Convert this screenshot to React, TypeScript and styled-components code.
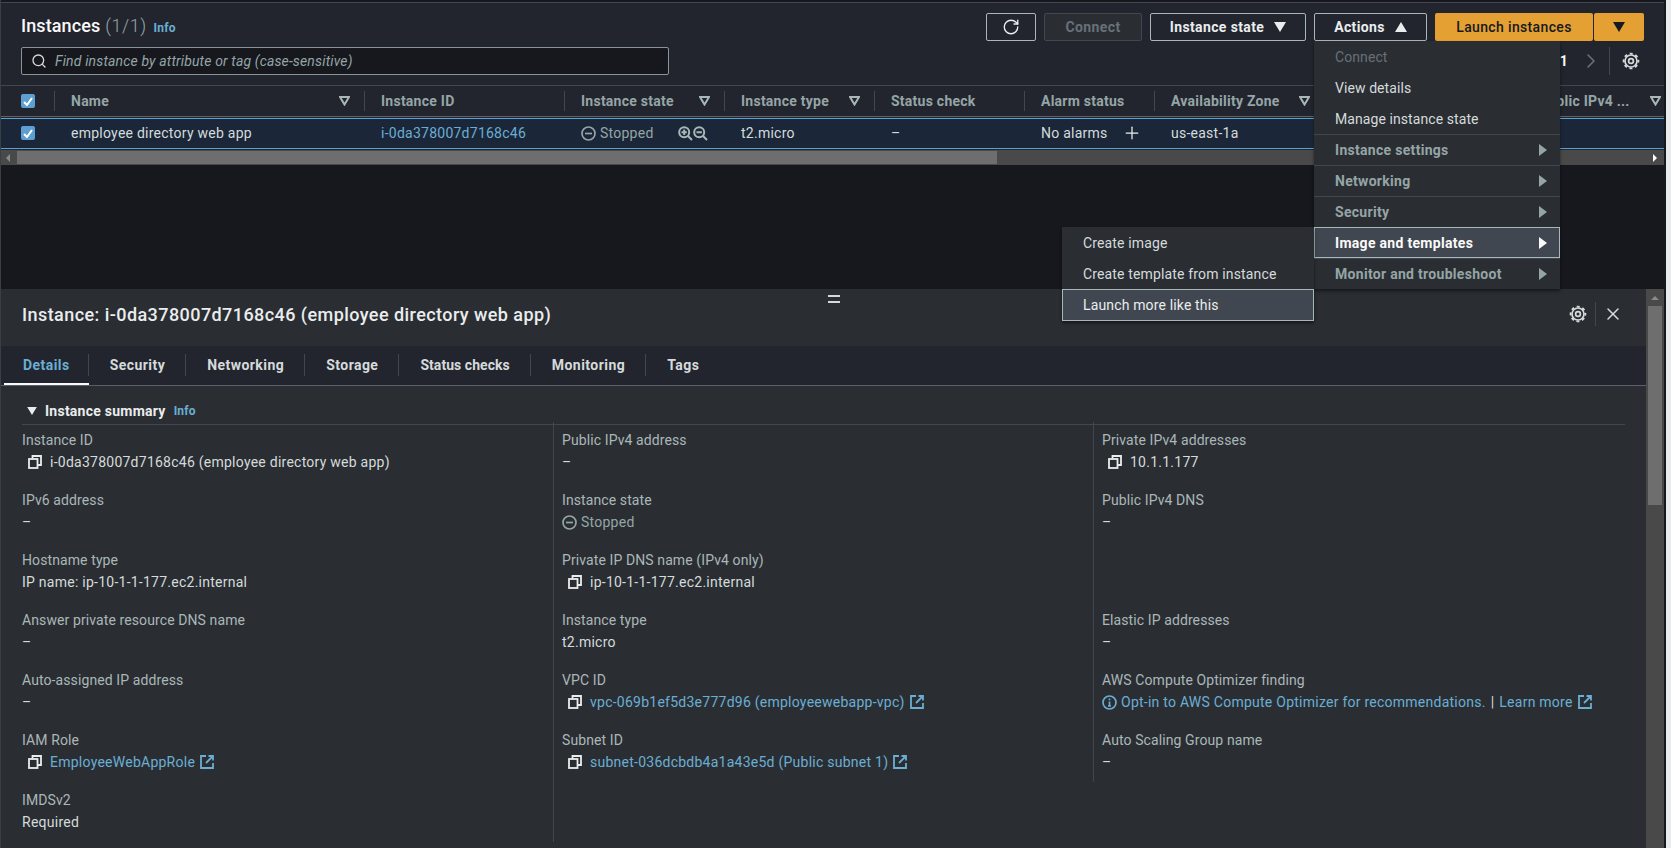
import React from "react";
import styled, { createGlobalStyle } from "styled-components";
import { Plus, RotateCw, Search, X, ChevronRight } from "lucide-react";

const GlobalStyle = createGlobalStyle`
  html, body {
    margin: 0;
    padding: 0;
    background: #e9ebed;
    font-family: Roboto, "Noto Sans", "Liberation Sans", sans-serif;
    font-size: 14px;
    letter-spacing: 0.25px;
  }
  * { box-sizing: border-box; }
`;

const LINK = "#6aaed3";
const COLUMNS = "53px 310px 200px 160px 150px 150px 130px 170px 198px 153px";

const Page = styled.div`
  width: 1671px;
  height: 848px;
  overflow: hidden;
  display: flex;
`;

const Main = styled.div`
  width: 1666px;
  height: 848px;
  flex: none;
  display: flex;
  flex-direction: column;
  background: #16181e;
  border-left: 1px solid #3a3f47;
  padding-right: 2px;
`;

const Strip = styled.div`
  flex: 1;
  background: #e9ebed;
`;

const TopPanel = styled.section`
  margin-top: 2px;
  border-top: 1px solid #414750;
  background: #22252e;
  flex: none;
`;

const HeaderArea = styled.div`
  height: 83px;
  padding: 10px 20px 0 20px;
  display: flex;
  flex-direction: column;
  border-bottom: 1px solid #414750;
`;

const HeaderTop = styled.div`
  display: flex;
  align-items: center;
  justify-content: space-between;
  height: 28px;
`;

const HeaderBottom = styled.div`
  display: flex;
  align-items: center;
  justify-content: space-between;
  margin-top: 6px;
  height: 28px;
`;

const Title = styled.h1`
  margin: 0 0 4px;
  font-size: 18px;
  font-weight: 500;
  letter-spacing: 0.1px;
  color: #fafafa;
  span {
    font-weight: 300;
    color: #95a5a6;
    margin-left: 5px;
    letter-spacing: 0.5px;
  }
`;

const InfoLink = styled.a<{ $flush?: boolean }>`
  color: ${LINK};
  font-size: 12px;
  font-weight: 700;
  letter-spacing: 0.2px;
  margin-left: ${(p) => (p.$flush ? 0 : 7)}px;
`;

const Actions = styled.div`
  display: flex;
  align-items: center;
  gap: 8px;
`;

const Button = styled.button<{ $w: number; $disabled?: boolean }>`
  width: ${(p) => p.$w}px;
  height: 28px;
  display: flex;
  align-items: center;
  justify-content: center;
  gap: 10px;
  padding: 0;
  font: 700 14px Roboto, sans-serif;
  letter-spacing: 0.38px;
  color: ${(p) => (p.$disabled ? "#687078" : "#eaeded")};
  background: ${(p) => (p.$disabled ? "#2a2e33" : "transparent")};
  border: 1px solid ${(p) => (p.$disabled ? "#414750" : "#aab7b8")};
  border-radius: 2px;
`;

const ActionsWrap = styled.div`
  position: relative;
`;

const SplitButton = styled.div`
  display: flex;
  gap: 1px;
`;

const PrimaryButton = styled.button<{ $w: number }>`
  width: ${(p) => p.$w}px;
  height: 28px;
  display: flex;
  align-items: center;
  justify-content: center;
  padding: 0;
  font: 500 14px Roboto, sans-serif;
  letter-spacing: 0.35px;
  color: #16191f;
  background: #e5a033;
  border: none;
  border-radius: 2px;
`;

const Caret = styled.svg<{ $up?: boolean; $color?: string; $small?: boolean }>`
  width: ${(p) => (p.$small ? 10 : 12)}px;
  height: ${(p) => (p.$small ? 8 : 10)}px;
  flex: none;
  fill: ${(p) => p.$color || "#eaeded"};
  transform: ${(p) => (p.$up ? "rotate(180deg)" : "none")};
`;

const Menu = styled.div`
  position: absolute;
  top: 28px;
  right: -133px;
  width: 246px;
  background: #2a2e33;
  box-shadow: 0 2px 3px rgba(0, 0, 0, 0.5);
  z-index: 5;
`;

const MenuItem = styled.div<{
  $dim?: boolean;
  $group?: boolean;
  $active?: boolean;
}>`
  position: relative;
  height: 31px;
  display: flex;
  align-items: center;
  justify-content: space-between;
  padding: 0 13px 0 21px;
  font-weight: ${(p) => (p.$group ? 700 : 400)};
  letter-spacing: ${(p) => (p.$group ? 0.3 : 0.08)}px;
  color: ${(p) => (p.$dim ? "#687078" : p.$group ? "#95a5a6" : "#d5dbdb")};
  border-top: ${(p) => (p.$group ? "1px solid #414750" : "none")};
  ${(p) =>
    p.$active
      ? "background: #414750; outline: 1px solid #aab7b8; outline-offset: -1px; color: #fafafa;"
      : ""}
`;

const SubMenu = styled.div`
  position: absolute;
  top: -1px;
  right: 246px;
  width: 252px;
  background: #2a2e33;
  box-shadow: 0 2px 3px rgba(0, 0, 0, 0.5);
  font-weight: 400;
  letter-spacing: 0.15px;
`;

const SubItem = styled.div<{ $active?: boolean }>`
  height: 31px;
  display: flex;
  align-items: center;
  padding-left: 21px;
  color: #d5dbdb;
  ${(p) =>
    p.$active
      ? "height: 32px; background: #414750; outline: 1px solid #aab7b8; outline-offset: -1px; color: #eaeded;"
      : ""}
`;

const SearchBox = styled.div`
  width: 648px;
  height: 28px;
  display: flex;
  align-items: center;
  gap: 8px;
  padding-left: 9px;
  background: #16181e;
  border: 1px solid #879596;
  border-radius: 2px;
  font-style: italic;
  letter-spacing: 0.15px;
  color: #95a5a6;
`;

const Pager = styled.div`
  display: flex;
  align-items: center;
  height: 28px;
  color: #fafafa;
  font-weight: 700;
  margin-right: 4px;
`;

const PagerChevron = styled.span`
  display: flex;
  margin-left: 11px;
  color: #687078;
`;

const PagerDivider = styled.span`
  width: 1px;
  height: 28px;
  background: #414750;
  margin: 0 12px 0 6px;
`;

const TableHead = styled.div`
  display: grid;
  grid-template-columns: ${COLUMNS};
  height: 31px;
  border-bottom: 1px solid #5b616b;
`;

const TableRow = styled.div`
  display: grid;
  grid-template-columns: ${COLUMNS};
  height: 31px;
  margin-top: 1px;
  padding-bottom: 1px;
  background: #1b2739;
  border-top: 1px solid #5c9fd0;
  border-bottom: 1px solid #5c9fd0;
  color: #d5dbdb;
`;

const CheckCell = styled.div`
  display: flex;
  align-items: center;
  padding-left: 20px;
`;

const Checkbox = styled.span`
  width: 14px;
  height: 14px;
  border-radius: 2px;
  background: #5c9fd0;
  display: flex;
  align-items: center;
  justify-content: center;
`;

const HeadCell = styled.div`
  position: relative;
  display: flex;
  align-items: center;
  justify-content: space-between;
  padding: 0 14px 0 17px;
  color: #95a5a6;
  font-weight: 700;
  letter-spacing: 0.25px;
  white-space: nowrap;
  overflow: hidden;
  &::before {
    content: "";
    position: absolute;
    left: 0;
    top: 5px;
    height: 20px;
    width: 1px;
    background: #414750;
  }
`;

const RowCell = styled.div`
  display: flex;
  align-items: center;
  padding-left: 17px;
  white-space: nowrap;
  gap: 4px;
`;

const CellLink = styled.a`
  color: ${LINK};
`;

const MutedText = styled.span`
  color: #95a5a6;
`;

const StoppedValue = styled(MutedText)`
  margin-left: 4px;
`;

const ZoomGroup = styled.span`
  display: flex;
  gap: 0;
  margin-left: 20px;
  color: #aab7b8;
`;

const AddAlarm = styled.span`
  display: flex;
  margin-left: 10px;
  color: #eaeded;
`;

const HScroll = styled.div`
  height: 15px;
  margin-top: 1px;
  background: #494949;
  display: flex;
  align-items: center;
  padding: 0 7px 0 5px;
`;

const HThumb = styled.span`
  width: 980px;
  height: 13px;
  margin-left: 7px;
  background: #6e6e6e;
`;

const Arrow = styled.span<{ $dir: "left" | "right" | "up"; $color?: string }>`
  width: 0;
  height: 0;
  ${(p) =>
    p.$dir === "left"
      ? `border-top: 4px solid transparent; border-bottom: 4px solid transparent; border-right: 4px solid ${p.$color || "#8a8a8a"};`
      : p.$dir === "right"
      ? `border-top: 4px solid transparent; border-bottom: 4px solid transparent; border-left: 4px solid ${p.$color || "#fff"}; margin-left: auto;`
      : `border-left: 4px solid transparent; border-right: 4px solid transparent; border-bottom: 4px solid ${p.$color || "#8a8a8a"};`}
`;

const Gap = styled.div`
  height: 124px;
  flex: none;
`;

const DetailWrap = styled.section`
  flex: 1;
  display: flex;
  position: relative;
  min-height: 0;
  background: #2a2e33;
`;

const Handle = styled.span`
  position: absolute;
  left: 827px;
  top: 6px;
  width: 12px;
  height: 8px;
  border-top: 2px solid #d5dbdb;
  border-bottom: 2px solid #d5dbdb;
`;

const DetailBody = styled.div`
  flex: 1;
  min-width: 0;
`;

const VScroll = styled.div`
  width: 18px;
  background: #494949;
  display: flex;
  flex-direction: column;
  align-items: center;
  padding-top: 7px;
`;

const VThumb = styled.span`
  width: 14px;
  height: 199px;
  margin-top: 6px;
  background: #6e6e6e;
`;

const DetailHeader = styled.div`
  height: 57px;
  display: flex;
  align-items: center;
  justify-content: space-between;
  padding: 0 23px 7px 21px;
`;

const DetailTitle = styled.h2`
  margin: 0;
  font-size: 18px;
  font-weight: 500;
  letter-spacing: 0.43px;
  color: #eaeded;
`;

const HeaderTools = styled.div`
  display: flex;
  align-items: center;
  color: #d5dbdb;
`;

const ToolDivider = styled.span`
  width: 1px;
  height: 24px;
  background: #414750;
  margin: 0 7px 0 8px;
`;

const TabBar = styled.div`
  height: 40px;
  display: flex;
  align-items: center;
  padding-left: 3px;
  background: #22252e;
  border-bottom: 1px solid #5b616b;
`;

const Tab = styled.div<{ $active?: boolean; $last?: boolean; $tight?: boolean }>`
  position: relative;
  height: 39px;
  display: flex;
  align-items: center;
  padding: 0 ${(p) => (p.$active ? 19 : 21)}px;
  font-weight: 700;
  letter-spacing: ${(p) => (p.$tight ? 0.05 : 0.45)}px;
  color: ${(p) => (p.$active ? LINK : "#d5dbdb")};
  border-bottom: 2px solid ${(p) => (p.$active ? "#fafafa" : "transparent")};
  &::after {
    content: "";
    position: absolute;
    right: 0;
    top: 8px;
    height: 22px;
    width: 1px;
    background: ${(p) => (p.$last ? "transparent" : "#414750")};
  }
`;

const Summary = styled.div`
  padding: 0 21px;
`;

const SummaryHead = styled.div`
  display: flex;
  align-items: center;
  gap: 8px;
  height: 39px;
  padding: 12px 0 0 5px;
  border-bottom: 1px solid #414750;
  color: #eaeded;
  font-weight: 700;
  letter-spacing: 0.25px;
`;

const SummaryGrid = styled.div`
  display: grid;
  grid-template-columns: 531px 540px 532px;
  margin-top: -3px;
`;

const Column = styled.div<{ $first?: boolean; $short?: boolean }>`
  padding-left: ${(p) => (p.$first ? 0 : 8)}px;
  padding-top: 8px;
  border-left: ${(p) => (p.$first ? "none" : "1px solid #414750")};
  height: ${(p) => (p.$short ? "360px" : "420px")};
`;

const Field = styled.div`
  height: 60px;
`;

const FieldLabel = styled.div`
  height: 20px;
  line-height: 20px;
  color: #aab7b8;
  letter-spacing: 0.1px;
`;

const FieldValue = styled.div`
  display: flex;
  align-items: center;
  height: 20px;
  margin-top: 2px;
  color: #d5dbdb;
  white-space: nowrap;
`;

const Link = styled.a`
  color: ${LINK};
`;

const CopySlot = styled.span`
  display: flex;
  margin: 0 8px 0 6px;
  color: #eaeded;
`;

const Trailing = styled.span`
  display: flex;
  margin-left: 5px;
  color: ${LINK};
`;

const InfoIconSlot = styled.span`
  display: flex;
  margin-right: 4px;
  color: ${LINK};
`;

const Pipe = styled.span`
  margin: 0 5px;
  color: #d5dbdb;
`;

const DownTriangle = ({ color, small }: { color?: string; small?: boolean }) => (
  <Caret viewBox="0 0 12 10" $color={color} $small={small}>
    <path d="M0 0h12L6 10z" />
  </Caret>
);

const RightTriangle = ({ color }: { color: string }) => (
  <svg width="8" height="12" viewBox="0 0 8 12" fill={color}>
    <path d="M0 0l8 6-8 6z" />
  </svg>
);

const FilterIcon = () => (
  <svg width="11" height="10" viewBox="0 0 11 10" fill="none" stroke="#aab7b8" strokeWidth="2">
    <path d="M1 1h9L5.5 8.5z" />
  </svg>
);

const Tick = () => (
  <svg width="10" height="9" viewBox="0 0 10 9" fill="none" stroke="#fff" strokeWidth="2">
    <path d="M1 5l3 3 5-7" />
  </svg>
);

const GearIcon = () => (
  <svg width="18" height="18" viewBox="0 0 18 18" fill="none" stroke="#d5dbdb">
    <circle cx="9" cy="9" r="6" strokeWidth="1.7" />
    <circle cx="9" cy="9" r="2.4" strokeWidth="1.7" />
    <circle cx="9" cy="9" r="7.4" strokeWidth="1.8" strokeDasharray="3 2.81" strokeDashoffset="1.5" />
  </svg>
);

const CopyIcon = () => (
  <svg width="14" height="14" viewBox="0 0 14 14" fill="none" stroke="currentColor" strokeWidth="1.8">
    <rect x="1" y="4" width="8.5" height="9" />
    <path d="M4.5 4V1h8.5v9h-3.5" />
  </svg>
);

const ExternalIcon = () => (
  <svg width="14" height="14" viewBox="0 0 14 14" fill="none" stroke="currentColor" strokeWidth="1.8">
    <path d="M6 1H1v12h12V8" />
    <path d="M8.5 1H13v4.5M13 1L6 8" />
  </svg>
);

const StoppedIcon = () => (
  <svg width="15" height="15" viewBox="0 0 15 15" fill="none" stroke="#95a5a6" strokeWidth="1.7">
    <circle cx="7.5" cy="7.5" r="6.5" />
    <path d="M4 7.5h7" />
  </svg>
);

const InfoCircle = () => (
  <svg width="15" height="15" viewBox="0 0 15 15" fill="none" stroke="currentColor" strokeWidth="1.7">
    <circle cx="7.5" cy="7.5" r="6.5" />
    <path d="M7.5 6.5v4.5M7.5 3.5v1.7M6 11h3" />
  </svg>
);

const ZoomIcon = ({ plus }: { plus?: boolean }) => (
  <svg width="15" height="15" viewBox="0 0 15 15" fill="none" stroke="currentColor" strokeWidth="2">
    <circle cx="6.2" cy="6.2" r="5" />
    <path d={plus ? "M3.5 6.2h5.4M6.2 3.5v5.4M10 10l4 4" : "M3.5 6.2h5.4M10 10l4 4"} />
  </svg>
);

type FieldData = {
  label?: string;
  value?: string;
  copy?: boolean;
  link?: boolean;
  external?: boolean;
  stopped?: boolean;
  optimizer?: boolean;
};

const columnOne: FieldData[] = [
  { label: "Instance ID", value: "i-0da378007d7168c46 (employee directory web app)", copy: true },
  { label: "IPv6 address", value: "–" },
  { label: "Hostname type", value: "IP name: ip-10-1-1-177.ec2.internal" },
  { label: "Answer private resource DNS name", value: "–" },
  { label: "Auto-assigned IP address", value: "–" },
  { label: "IAM Role", value: "EmployeeWebAppRole", copy: true, link: true, external: true },
  { label: "IMDSv2", value: "Required" },
];

const columnTwo: FieldData[] = [
  { label: "Public IPv4 address", value: "–" },
  { label: "Instance state", value: "Stopped", stopped: true },
  { label: "Private IP DNS name (IPv4 only)", value: "ip-10-1-1-177.ec2.internal", copy: true },
  { label: "Instance type", value: "t2.micro" },
  { label: "VPC ID", value: "vpc-069b1ef5d3e777d96 (employeewebapp-vpc)", copy: true, link: true, external: true },
  { label: "Subnet ID", value: "subnet-036dcbdb4a1a43e5d (Public subnet 1)", copy: true, link: true, external: true },
];

const columnThree: FieldData[] = [
  { label: "Private IPv4 addresses", value: "10.1.1.177", copy: true },
  { label: "Public IPv4 DNS", value: "–" },
  {},
  { label: "Elastic IP addresses", value: "–" },
  { label: "AWS Compute Optimizer finding", optimizer: true },
  { label: "Auto Scaling Group name", value: "–" },
];

const tabs = ["Details", "Security", "Networking", "Storage", "Status checks", "Monitoring", "Tags"];

const headCells: [string, boolean][] = [
  ["Name", true],
  ["Instance ID", false],
  ["Instance state", true],
  ["Instance type", true],
  ["Status check", false],
  ["Alarm status", false],
  ["Availability Zone", true],
  ["", false],
  ["Public IPv4 ...", true],
];

function renderField(f: FieldData, i: number) {
  if (!f.label) return <Field key={i} />;
  return (
    <Field key={i}>
      <FieldLabel>{f.label}</FieldLabel>
      <FieldValue>
        {f.copy && (
          <CopySlot>
            <CopyIcon />
          </CopySlot>
        )}
        {f.stopped && (
          <>
            <StoppedIcon />
            <StoppedValue>{f.value}</StoppedValue>
          </>
        )}
        {f.optimizer && (
          <>
            <InfoIconSlot>
              <InfoCircle />
            </InfoIconSlot>
            <Link>Opt-in to AWS Compute Optimizer for recommendations.</Link>
            <Pipe>|</Pipe>
            <Link>Learn more</Link>
            <Trailing>
              <ExternalIcon />
            </Trailing>
          </>
        )}
        {!f.stopped && !f.optimizer && (f.link ? <Link>{f.value}</Link> : f.value)}
        {f.external && (
          <Trailing>
            <ExternalIcon />
          </Trailing>
        )}
      </FieldValue>
    </Field>
  );
}

export default function App() {
  return (
    <Page>
      <GlobalStyle />
      <Main>
        <TopPanel>
          <HeaderArea>
            <HeaderTop>
              <Title>
                Instances<span>(1/1)</span>
                <InfoLink>Info</InfoLink>
              </Title>
              <Actions>
                <Button $w={50}>
                  <RotateCw size={18} strokeWidth={1.8} />
                </Button>
                <Button $w={98} $disabled>
                  Connect
                </Button>
                <Button $w={156}>
                  Instance state
                  <DownTriangle />
                </Button>
                <ActionsWrap>
                  <Button $w={113}>
                    Actions
                    <Caret viewBox="0 0 12 10" $up>
                      <path d="M0 0h12L6 10z" />
                    </Caret>
                  </Button>
                  <Menu>
                    <MenuItem $dim>Connect</MenuItem>
                    <MenuItem>View details</MenuItem>
                    <MenuItem>Manage instance state</MenuItem>
                    <MenuItem $group>
                      Instance settings
                      <RightTriangle color="#95a5a6" />
                    </MenuItem>
                    <MenuItem $group>
                      Networking
                      <RightTriangle color="#95a5a6" />
                    </MenuItem>
                    <MenuItem $group>
                      Security
                      <RightTriangle color="#95a5a6" />
                    </MenuItem>
                    <MenuItem $group $active>
                      Image and templates
                      <RightTriangle color="#fafafa" />
                      <SubMenu>
                        <SubItem>Create image</SubItem>
                        <SubItem>Create template from instance</SubItem>
                        <SubItem $active>Launch more like this</SubItem>
                      </SubMenu>
                    </MenuItem>
                    <MenuItem $group>
                      Monitor and troubleshoot
                      <RightTriangle color="#95a5a6" />
                    </MenuItem>
                  </Menu>
                </ActionsWrap>
                <SplitButton>
                  <PrimaryButton $w={158}>Launch instances</PrimaryButton>
                  <PrimaryButton $w={50}>
                    <DownTriangle color="#16191f" />
                  </PrimaryButton>
                </SplitButton>
              </Actions>
            </HeaderTop>
            <HeaderBottom>
              <SearchBox>
                <Search size={16} color="#d5dbdb" strokeWidth={2} />
                Find instance by attribute or tag (case-sensitive)
              </SearchBox>
              <Pager>
                1
                <PagerChevron>
                  <ChevronRight size={24} strokeWidth={1.6} />
                </PagerChevron>
                <PagerDivider />
                <GearIcon />
              </Pager>
            </HeaderBottom>
          </HeaderArea>
          <TableHead>
            <CheckCell>
              <Checkbox>
                <Tick />
              </Checkbox>
            </CheckCell>
            {headCells.map(([name, filter], i) => (
              <HeadCell key={i}>
                {name}
                {filter && <FilterIcon />}
              </HeadCell>
            ))}
          </TableHead>
          <TableRow>
            <CheckCell>
              <Checkbox>
                <Tick />
              </Checkbox>
            </CheckCell>
            <RowCell>employee directory web app</RowCell>
            <RowCell>
              <CellLink>i-0da378007d7168c46</CellLink>
            </RowCell>
            <RowCell>
              <StoppedIcon />
              <MutedText>Stopped</MutedText>
              <ZoomGroup>
                <ZoomIcon plus />
                <ZoomIcon />
              </ZoomGroup>
            </RowCell>
            <RowCell>t2.micro</RowCell>
            <RowCell>–</RowCell>
            <RowCell>
              No alarms
              <AddAlarm>
                <Plus size={20} strokeWidth={1.5} />
              </AddAlarm>
            </RowCell>
            <RowCell>us-east-1a</RowCell>
            <RowCell />
            <RowCell />
          </TableRow>
          <HScroll>
            <Arrow $dir="left" />
            <HThumb />
            <Arrow $dir="right" />
          </HScroll>
        </TopPanel>
        <Gap />
        <DetailWrap>
          <Handle />
          <DetailBody>
            <DetailHeader>
              <DetailTitle>Instance: i-0da378007d7168c46 (employee directory web app)</DetailTitle>
              <HeaderTools>
                <GearIcon />
                <ToolDivider />
                <X size={20} strokeWidth={1.8} />
              </HeaderTools>
            </DetailHeader>
            <TabBar>
              {tabs.map((t, i) => (
                <Tab key={t} $active={i === 0} $last={i === tabs.length - 1} $tight={t === "Status checks"}>
                  {t}
                </Tab>
              ))}
            </TabBar>
            <Summary>
              <SummaryHead>
                <DownTriangle small />
                Instance summary
                <InfoLink $flush>Info</InfoLink>
              </SummaryHead>
              <SummaryGrid>
                <Column $first>{columnOne.map(renderField)}</Column>
                <Column>{columnTwo.map(renderField)}</Column>
                <Column $short>{columnThree.map(renderField)}</Column>
              </SummaryGrid>
            </Summary>
          </DetailBody>
          <VScroll>
            <Arrow $dir="up" />
            <VThumb />
          </VScroll>
        </DetailWrap>
      </Main>
      <Strip />
    </Page>
  );
}
